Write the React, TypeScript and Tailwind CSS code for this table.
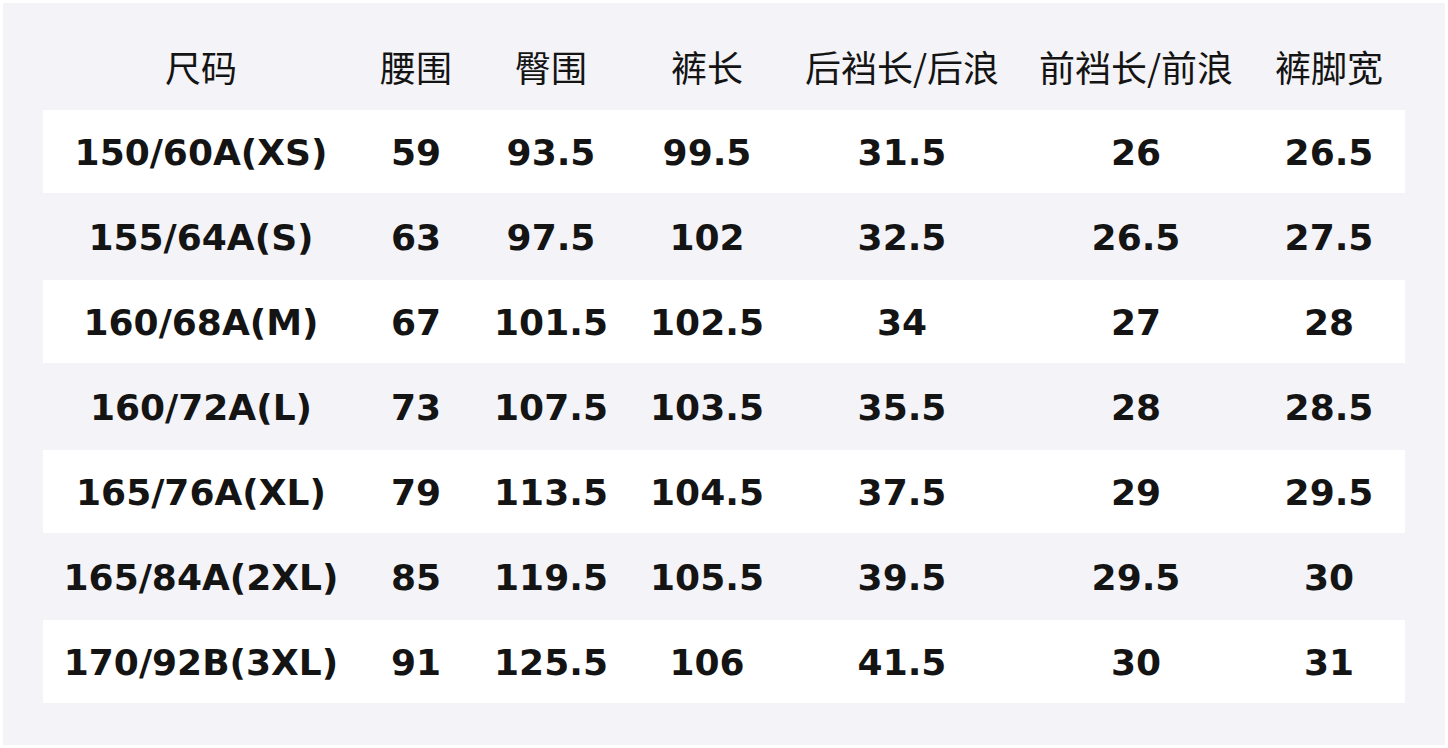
import React from 'react';

const headers = ['尺码', '腰围', '臀围', '裤长', '后裆长/后浪', '前裆长/前浪', '裤脚宽'];

const rows = [
  ['150/60A(XS)', '59', '93.5', '99.5', '31.5', '26', '26.5'],
  ['155/64A(S)', '63', '97.5', '102', '32.5', '26.5', '27.5'],
  ['160/68A(M)', '67', '101.5', '102.5', '34', '27', '28'],
  ['160/72A(L)', '73', '107.5', '103.5', '35.5', '28', '28.5'],
  ['165/76A(XL)', '79', '113.5', '104.5', '37.5', '29', '29.5'],
  ['165/84A(2XL)', '85', '119.5', '105.5', '39.5', '29.5', '30'],
  ['170/92B(3XL)', '91', '125.5', '106', '41.5', '30', '31'],
];

// column widths measured off the reference
const cols = ['w-[316px]', 'w-[114px]', 'w-[156px]', 'w-[156px]', 'w-[234px]', 'w-[234px]', 'w-[152px]'];

export default function App() {
  return (
    <div className="w-[1448px] h-[748px] bg-white p-[3px]">
      <div className="h-full bg-[#f3f3f8] px-[40px] pt-[22px] font-['DejaVu_Sans','Noto_Sans_CJK_SC',sans-serif] text-[#141414]">
        {/* Header */}
        <div className="flex h-[85px] items-center">
          {headers.map((h, i) => (
            <div key={h} className={`${cols[i]} text-center text-[36px] leading-none pb-[4px] font-['Noto_Sans_CJK_SC',sans-serif]`}>
              {h}
            </div>
          ))}
        </div>

        {/* Body */}
        {rows.map((r, ri) => (
          <div
            key={r[0]}
            className={`flex h-[85px] items-center ${ri % 2 === 0 ? 'bg-white border-b-2 border-[#f3f3f8]' : ''}`}
          >
            {r.map((c, ci) => (
              <div key={ci} className={`${cols[ci]} text-center text-[36px] font-bold leading-none ${ri % 2 === 0 ? 'pt-[2px]' : ''}`}>
                {c}
              </div>
            ))}
          </div>
        ))}
      </div>
    </div>
  );
}
